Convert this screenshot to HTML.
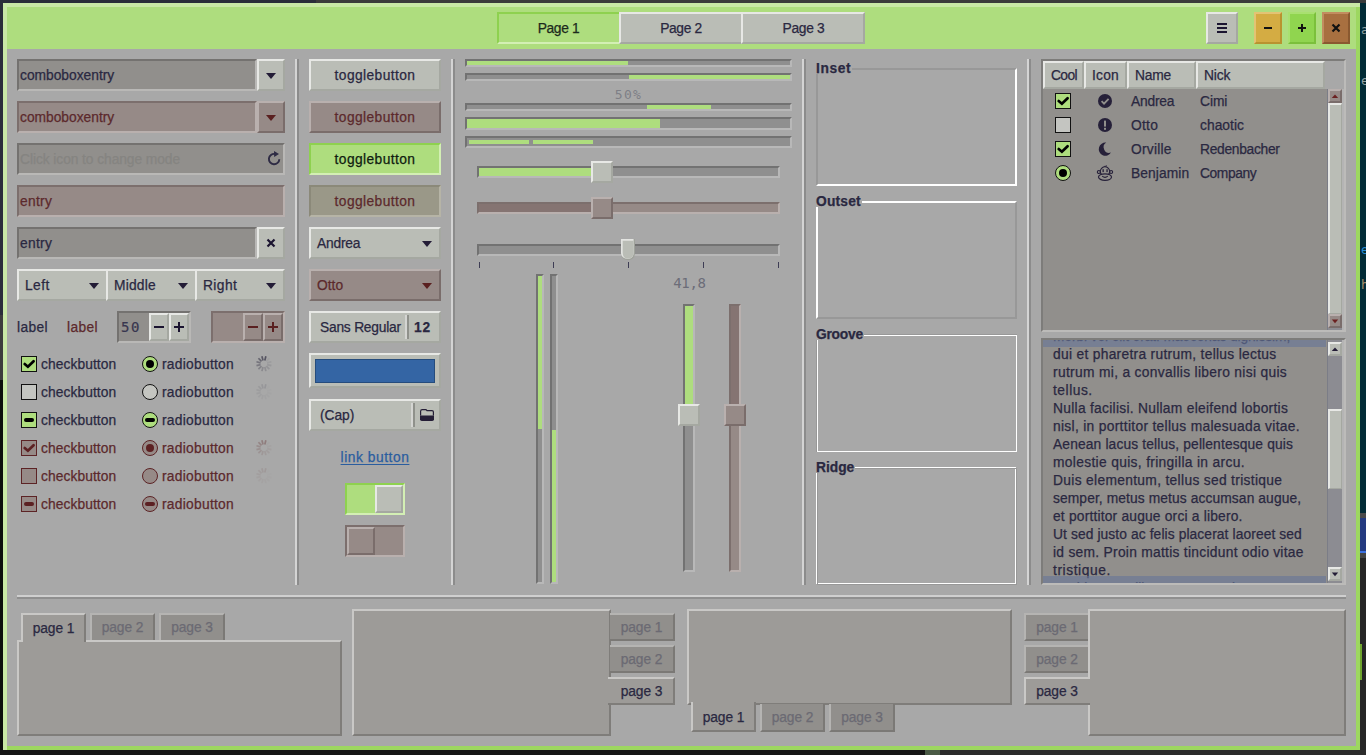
<!DOCTYPE html><html><head><meta charset='utf-8'><title>GTK3 Widget Factory</title><style>
*{box-sizing:border-box;margin:0;padding:0}
html,body{width:1366px;height:755px;overflow:hidden;background:#1b1c20}
body{position:relative;font-family:"Liberation Sans","DejaVu Sans",sans-serif;font-size:13.8px;color:#2a2841;line-height:1}
.a{position:absolute}
.t{position:absolute;white-space:nowrap;line-height:21px;height:21px;-webkit-text-stroke:0.25px currentColor}
.c{text-align:center}
.ins{color:#5c292c}
.dim{color:#6b6a73}
.entry{position:absolute;background:#918f8c;border:2px solid;border-color:#747270 #b9b8b6 #b9b8b6 #747270}
.entry.i{background:#968a87;border-color:#7c6f6d #b9b0ae #b9b0ae #7c6f6d}
.btn{position:absolute;background:#babdb6;border:2px solid;border-color:#e7e8e5 #a5a8a1 #a5a8a1 #e7e8e5}
.btn.i{background:#968a87;border-color:#b9b0ae #7a6d6b #7a6d6b #b9b0ae}
.btn.on{background:#aedd7e;border-color:#8ed14f #d3efb4 #d3efb4 #8ed14f}
.btn.oni{background:#9a9888;border-color:#8b8979 #b6b4a6 #b6b4a6 #8b8979}
.vsep{position:absolute;width:4px;border-left:2px solid #d4d4d4;border-right:2px solid #8c8c8c}
.tr{position:absolute;background:#8f8f8f;border:2px solid;border-color:#727272 #b8b8b8 #b8b8b8 #727272}
.tr.i{background:#968a87;border-color:#7c6f6d #b9b0ae #b9b0ae #7c6f6d}
.fill{position:absolute;background:#aedd7e}
.nb{position:absolute;background:#9d9b98;border:2px solid;border-color:#c9c8c6 #7f7d7a #7f7d7a #c9c8c6}
.tab{position:absolute;background:#918f8c;border:2px solid;border-color:#b5b4b2 #7b7976 #7b7976 #b5b4b2;color:#6b6a73;text-align:center}
.tab.act{background:#9d9b98;color:#2a2841;border-color:#c9c8c6 #7f7d7a #7f7d7a #c9c8c6}
.mono{font-family:"DejaVu Sans Mono","Liberation Mono",monospace;-webkit-text-stroke:0}
.b{font-weight:bold}
svg{position:absolute;overflow:visible}
</style></head><body>
<div class="a" style="left:0;top:0;width:316px;height:3px;background:#2a2d3a"></div>
<div class="a" style="left:316px;top:0;width:1050px;height:3px;background:#3b3b3b"></div>
<div class="a" style="left:0;top:3px;width:3px;height:312px;background:#2a2d3a"></div>
<div class="a" style="left:0;top:315px;width:3px;height:65px;background:#3c3c3c"></div>
<div class="a" style="left:0;top:380px;width:3px;height:375px;background:#0c0e0c"></div>
<div class="a" style="left:1360px;top:3px;width:6px;height:510px;background:#022b36"></div>
<div class="a" style="left:1360px;top:513px;width:6px;height:5px;background:#4a4a4a"></div>
<div class="a" style="left:1360px;top:518px;width:6px;height:33px;background:#233a80"></div>
<div class="a" style="left:1360px;top:551px;width:6px;height:2px;background:#3b70e0"></div>
<div class="a" style="left:1360px;top:553px;width:6px;height:5px;background:#444"></div>
<div class="a" style="left:1360px;top:558px;width:6px;height:197px;background:#262626"></div>
<div class="a" style="left:1360px;top:644px;width:2px;height:36px;background:#6fa42e"></div>
<div class="a" style="left:0;top:750px;width:1366px;height:5px;background:#151515"></div>
<div class="a" style="left:925px;top:750px;width:15px;height:5px;background:#4a5a45"></div>
<div class="a" style="left:940px;top:750px;width:426px;height:5px;background:#2b2b2b"></div>
<div class="t mono" style="left:1361px;top:19px;font-size:12.5px;color:#93a1a1">a</div>
<div class="t mono" style="left:1361px;top:70px;font-size:12.5px;color:#93a1a1">e</div>
<div class="t mono" style="left:1361px;top:239px;font-size:12.5px;color:#268bd2">e</div>
<div class="t mono" style="left:1361px;top:274px;font-size:12.5px;color:#a8916a">h</div>
<div class="a" style="left:3px;top:3px;width:1357px;height:747px;background:#a8a8a8"></div>
<div class="a" style="left:1356px;top:7px;width:4px;height:743px;background:#9dd760"></div>
<div class="a" style="left:7px;top:746px;width:1353px;height:4px;background:#9dd760"></div>
<div class="a" style="left:3px;top:3px;width:1357px;height:4px;background:#c9e8a6"></div>
<div class="a" style="left:3px;top:3px;width:4px;height:747px;background:#c9e8a6"></div>
<div class="a" style="left:7px;top:7px;width:1349px;height:42px;background:#aedd7e"></div>
<div class="btn on" style="left:497px;top:12px;width:122px;height:32px;border-right-width:0"></div>
<div class="btn" style="left:619px;top:12px;width:122px;height:32px;border-right-width:0"></div>
<div class="btn" style="left:741px;top:12px;width:124px;height:32px"></div>
<div class="t c" style="left:497px;top:18px;width:123px;letter-spacing:-0.36px;color:#1c2a1c">Page 1</div>
<div class="t c" style="left:620px;top:18px;width:122px;letter-spacing:-0.36px;">Page 2</div>
<div class="t c" style="left:742px;top:18px;width:123px;letter-spacing:-0.32px;">Page 3</div>
<div class="btn" style="left:1206px;top:12px;width:32px;height:32px"></div>
<div class="a" style="left:1217px;top:23px;width:10px;height:2px;background:#1b1430"></div>
<div class="a" style="left:1217px;top:27px;width:10px;height:2px;background:#1b1430"></div>
<div class="a" style="left:1217px;top:31px;width:10px;height:2px;background:#1b1430"></div>
<div class="btn" style="left:1254px;top:12px;width:28px;height:32px;background:#d4ac43;border-color:#e3c374 #b9932f #b9932f #e3c374"></div>
<div class="a" style="left:1264px;top:27px;width:8px;height:2px;background:#111"></div>
<div class="btn" style="left:1288px;top:12px;width:28px;height:32px;background:#90d54f;border-color:#a9e070 #7bc03b #7bc03b #a9e070"></div>
<div class="a" style="left:1298px;top:27px;width:8px;height:2px;background:#111"></div>
<div class="a" style="left:1301px;top:24px;width:2px;height:8px;background:#111"></div>
<div class="btn" style="left:1322px;top:12px;width:28px;height:32px;background:#a87040;border-color:#c28d60 #8a5930 #8a5930 #c28d60"></div>
<svg style="left:0;top:0" width="1" height="1"><path d="M1332.5 24.5 L1339.5 31.5 M1339.5 24.5 L1332.5 31.5" stroke="#111" stroke-width="2.2"/></svg>
<div class="entry" style="left:17px;top:59px;width:240px;height:32px"></div>
<div class="btn" style="left:257px;top:59px;width:28px;height:32px"></div>
<svg style="left:0;top:0" width="1" height="1"><polygon points="266.0,73.0 276.0,73.0 271,79.0" fill="#231c36"/></svg>
<div class="t " style="left:20px;top:65px;letter-spacing:-0.01px;">comboboxentry</div>
<div class="entry i" style="left:17px;top:101px;width:240px;height:32px"></div>
<div class="btn i" style="left:257px;top:101px;width:28px;height:32px"></div>
<svg style="left:0;top:0" width="1" height="1"><polygon points="266.0,115.0 276.0,115.0 271,121.0" fill="#5a2020"/></svg>
<div class="t ins" style="left:20px;top:107px;letter-spacing:-0.01px;">comboboxentry</div>
<div class="entry" style="left:17px;top:143px;width:268px;height:32px"></div>
<div class="t " style="left:20px;top:149px;letter-spacing:-0.07px;color:#858481">Click icon to change mode</div>
<svg style="left:0;top:0" width="1" height="1"><path d="M279.3 159.2 A5.2 5.2 0 1 1 274.9 153.9" fill="none" stroke="#2e2b44" stroke-width="1.9"/><polygon points="274.0,150.9 279.0,153.9 274.2,156.9" fill="#2e2b44"/></svg>
<div class="entry i" style="left:17px;top:185px;width:268px;height:32px"></div>
<div class="t ins" style="left:20px;top:191px;letter-spacing:0.30px;">entry</div>
<div class="entry" style="left:17px;top:227px;width:240px;height:32px"></div>
<div class="btn" style="left:257px;top:227px;width:28px;height:32px"></div>
<div class="t " style="left:20px;top:233px;letter-spacing:0.30px;">entry</div>
<svg style="left:0;top:0" width="1" height="1"><path d="M267.5 239.5 L274.5 246.5 M274.5 239.5 L267.5 246.5" stroke="#1b1430" stroke-width="2.2"/></svg>
<div class="btn" style="left:17px;top:269px;width:89px;height:32px;border-right-width:0"></div>
<div class="t " style="left:25px;top:275px;letter-spacing:0.42px;">Left</div>
<svg style="left:0;top:0" width="1" height="1"><polygon points="89.0,283.0 99.0,283.0 94,289.0" fill="#231c36"/></svg>
<div class="btn" style="left:106px;top:269px;width:89px;height:32px;border-right-width:0"></div>
<div class="t " style="left:114px;top:275px;letter-spacing:0.19px;">Middle</div>
<svg style="left:0;top:0" width="1" height="1"><polygon points="178.0,283.0 188.0,283.0 183,289.0" fill="#231c36"/></svg>
<div class="btn" style="left:195px;top:269px;width:90px;height:32px;"></div>
<div class="t " style="left:203px;top:275px;letter-spacing:0.40px;">Right</div>
<svg style="left:0;top:0" width="1" height="1"><polygon points="266.0,283.0 276.0,283.0 271,289.0" fill="#231c36"/></svg>
<div class="t " style="left:17px;top:317px;letter-spacing:0.33px;">label</div>
<div class="t ins" style="left:67px;top:317px;letter-spacing:0.33px;">label</div>
<div class="entry" style="left:117px;top:311px;width:74px;height:32px"></div>
<div class="btn" style="left:149px;top:313px;width:20px;height:28px"></div>
<div class="btn" style="left:169px;top:313px;width:20px;height:28px"></div>
<div class="t mono" style="left:121px;top:317px;font-size:14px;letter-spacing:1.6px;color:#38364f;-webkit-text-stroke:0.2px #38364f">50</div>
<div class="a" style="left:154px;top:326px;width:10px;height:2px;background:#1b1430"></div>
<div class="a" style="left:174px;top:326px;width:10px;height:2px;background:#1b1430"></div>
<div class="a" style="left:178px;top:322px;width:2px;height:10px;background:#1b1430"></div>
<div class="entry i" style="left:211px;top:311px;width:74px;height:32px"></div>
<div class="btn i" style="left:243px;top:313px;width:20px;height:28px"></div>
<div class="btn i" style="left:263px;top:313px;width:20px;height:28px"></div>
<div class="a" style="left:248px;top:326px;width:10px;height:2px;background:#5a2020"></div>
<div class="a" style="left:268px;top:326px;width:10px;height:2px;background:#5a2020"></div>
<div class="a" style="left:272px;top:322px;width:2px;height:10px;background:#5a2020"></div>
<div class="a" style="left:21px;top:356px;width:16px;height:16px;background:#aedd7e;border:1px solid #111"></div>
<svg style="left:21px;top:356px" width="16" height="16" viewBox="0 0 16 16"><path d="M3.7 8 L6.9 10.7 L12.6 5.2" fill="none" stroke="#000" stroke-width="2.7" stroke-linecap="round"/></svg>
<div class="t " style="left:41px;top:354px;letter-spacing:0.07px;">checkbutton</div>
<div class="a" style="left:142px;top:356px;width:16px;height:16px;border-radius:50%;background:#aedd7e;border:1.5px solid #111"></div>
<div class="a" style="left:146px;top:360px;width:8px;height:8px;border-radius:50%;background:#000"></div>
<div class="t " style="left:162px;top:354px;letter-spacing:0.27px;">radiobutton</div>
<div class="a" style="left:21px;top:384px;width:16px;height:16px;background:#c4c5c1;border:1px solid #111"></div>
<div class="t " style="left:41px;top:382px;letter-spacing:0.07px;">checkbutton</div>
<div class="a" style="left:142px;top:384px;width:16px;height:16px;border-radius:50%;background:#c4c5c1;border:1.5px solid #111"></div>
<div class="t " style="left:162px;top:382px;letter-spacing:0.27px;">radiobutton</div>
<div class="a" style="left:21px;top:412px;width:16px;height:16px;background:#aedd7e;border:1px solid #111"></div>
<div class="a" style="left:24px;top:418px;width:10px;height:4px;border-radius:2px;background:#000"></div>
<div class="t " style="left:41px;top:410px;letter-spacing:0.07px;">checkbutton</div>
<div class="a" style="left:142px;top:412px;width:16px;height:16px;border-radius:50%;background:#aedd7e;border:1.5px solid #111"></div>
<div class="a" style="left:145px;top:418px;width:10px;height:4px;border-radius:2px;background:#000"></div>
<div class="t " style="left:162px;top:410px;letter-spacing:0.27px;">radiobutton</div>
<div class="a" style="left:21px;top:440px;width:16px;height:16px;background:#968a87;border:1px solid #5c2325"></div>
<svg style="left:21px;top:440px" width="16" height="16" viewBox="0 0 16 16"><path d="M3.7 8 L6.9 10.7 L12.6 5.2" fill="none" stroke="#5c2022" stroke-width="2.7" stroke-linecap="round"/></svg>
<div class="t ins" style="left:41px;top:438px;letter-spacing:0.07px;">checkbutton</div>
<div class="a" style="left:142px;top:440px;width:16px;height:16px;border-radius:50%;background:#968a87;border:1.5px solid #5c2325"></div>
<div class="a" style="left:146px;top:444px;width:8px;height:8px;border-radius:50%;background:#5c2022"></div>
<div class="t ins" style="left:162px;top:438px;letter-spacing:0.27px;">radiobutton</div>
<div class="a" style="left:21px;top:468px;width:16px;height:16px;background:#968a87;border:1px solid #5c2325"></div>
<div class="t ins" style="left:41px;top:466px;letter-spacing:0.07px;">checkbutton</div>
<div class="a" style="left:142px;top:468px;width:16px;height:16px;border-radius:50%;background:#968a87;border:1.5px solid #5c2325"></div>
<div class="t ins" style="left:162px;top:466px;letter-spacing:0.27px;">radiobutton</div>
<div class="a" style="left:21px;top:496px;width:16px;height:16px;background:#968a87;border:1px solid #5c2325"></div>
<div class="a" style="left:24px;top:502px;width:10px;height:4px;border-radius:2px;background:#5c2022"></div>
<div class="t ins" style="left:41px;top:494px;letter-spacing:0.07px;">checkbutton</div>
<div class="a" style="left:142px;top:496px;width:16px;height:16px;border-radius:50%;background:#968a87;border:1.5px solid #5c2325"></div>
<div class="a" style="left:145px;top:502px;width:10px;height:4px;border-radius:2px;background:#5c2022"></div>
<div class="t ins" style="left:162px;top:494px;letter-spacing:0.27px;">radiobutton</div>
<svg style="left:0;top:0;opacity:0.78" width="1" height="1"><line x1="264.78" y1="360.42" x2="265.89" y2="356.26" stroke="#3f3d4e" stroke-width="1.7" stroke-opacity="1.00"/><line x1="263.02" y1="360.42" x2="261.91" y2="356.26" stroke="#3f3d4e" stroke-width="1.7" stroke-opacity="0.95"/><line x1="261.50" y1="361.30" x2="258.46" y2="358.26" stroke="#3f3d4e" stroke-width="1.7" stroke-opacity="0.80"/><line x1="260.62" y1="362.82" x2="256.46" y2="361.71" stroke="#3f3d4e" stroke-width="1.7" stroke-opacity="0.62"/><line x1="260.62" y1="364.58" x2="256.46" y2="365.69" stroke="#3f3d4e" stroke-width="1.7" stroke-opacity="0.55"/><line x1="261.50" y1="366.10" x2="258.46" y2="369.14" stroke="#3f3d4e" stroke-width="1.7" stroke-opacity="0.45"/><line x1="263.02" y1="366.98" x2="261.91" y2="371.14" stroke="#3f3d4e" stroke-width="1.7" stroke-opacity="0.36"/><line x1="264.78" y1="366.98" x2="265.89" y2="371.14" stroke="#3f3d4e" stroke-width="1.7" stroke-opacity="0.30"/><line x1="266.30" y1="366.10" x2="269.34" y2="369.14" stroke="#3f3d4e" stroke-width="1.7" stroke-opacity="0.24"/><line x1="267.18" y1="364.58" x2="271.34" y2="365.69" stroke="#3f3d4e" stroke-width="1.7" stroke-opacity="0.18"/><line x1="267.18" y1="362.82" x2="271.34" y2="361.71" stroke="#3f3d4e" stroke-width="1.7" stroke-opacity="0.13"/><line x1="266.30" y1="361.30" x2="269.34" y2="358.26" stroke="#3f3d4e" stroke-width="1.7" stroke-opacity="0.08"/></svg>
<svg style="left:0;top:0;opacity:0.16" width="1" height="1"><line x1="264.78" y1="388.42" x2="265.89" y2="384.26" stroke="#3f3d4e" stroke-width="1.7" stroke-opacity="1.00"/><line x1="263.02" y1="388.42" x2="261.91" y2="384.26" stroke="#3f3d4e" stroke-width="1.7" stroke-opacity="0.95"/><line x1="261.50" y1="389.30" x2="258.46" y2="386.26" stroke="#3f3d4e" stroke-width="1.7" stroke-opacity="0.80"/><line x1="260.62" y1="390.82" x2="256.46" y2="389.71" stroke="#3f3d4e" stroke-width="1.7" stroke-opacity="0.62"/><line x1="260.62" y1="392.58" x2="256.46" y2="393.69" stroke="#3f3d4e" stroke-width="1.7" stroke-opacity="0.55"/><line x1="261.50" y1="394.10" x2="258.46" y2="397.14" stroke="#3f3d4e" stroke-width="1.7" stroke-opacity="0.45"/><line x1="263.02" y1="394.98" x2="261.91" y2="399.14" stroke="#3f3d4e" stroke-width="1.7" stroke-opacity="0.36"/><line x1="264.78" y1="394.98" x2="265.89" y2="399.14" stroke="#3f3d4e" stroke-width="1.7" stroke-opacity="0.30"/><line x1="266.30" y1="394.10" x2="269.34" y2="397.14" stroke="#3f3d4e" stroke-width="1.7" stroke-opacity="0.24"/><line x1="267.18" y1="392.58" x2="271.34" y2="393.69" stroke="#3f3d4e" stroke-width="1.7" stroke-opacity="0.18"/><line x1="267.18" y1="390.82" x2="271.34" y2="389.71" stroke="#3f3d4e" stroke-width="1.7" stroke-opacity="0.13"/><line x1="266.30" y1="389.30" x2="269.34" y2="386.26" stroke="#3f3d4e" stroke-width="1.7" stroke-opacity="0.08"/></svg>
<svg style="left:0;top:0;opacity:0.4" width="1" height="1"><line x1="264.78" y1="444.42" x2="265.89" y2="440.26" stroke="#6a3a3a" stroke-width="1.7" stroke-opacity="1.00"/><line x1="263.02" y1="444.42" x2="261.91" y2="440.26" stroke="#6a3a3a" stroke-width="1.7" stroke-opacity="0.95"/><line x1="261.50" y1="445.30" x2="258.46" y2="442.26" stroke="#6a3a3a" stroke-width="1.7" stroke-opacity="0.80"/><line x1="260.62" y1="446.82" x2="256.46" y2="445.71" stroke="#6a3a3a" stroke-width="1.7" stroke-opacity="0.62"/><line x1="260.62" y1="448.58" x2="256.46" y2="449.69" stroke="#6a3a3a" stroke-width="1.7" stroke-opacity="0.55"/><line x1="261.50" y1="450.10" x2="258.46" y2="453.14" stroke="#6a3a3a" stroke-width="1.7" stroke-opacity="0.45"/><line x1="263.02" y1="450.98" x2="261.91" y2="455.14" stroke="#6a3a3a" stroke-width="1.7" stroke-opacity="0.36"/><line x1="264.78" y1="450.98" x2="265.89" y2="455.14" stroke="#6a3a3a" stroke-width="1.7" stroke-opacity="0.30"/><line x1="266.30" y1="450.10" x2="269.34" y2="453.14" stroke="#6a3a3a" stroke-width="1.7" stroke-opacity="0.24"/><line x1="267.18" y1="448.58" x2="271.34" y2="449.69" stroke="#6a3a3a" stroke-width="1.7" stroke-opacity="0.18"/><line x1="267.18" y1="446.82" x2="271.34" y2="445.71" stroke="#6a3a3a" stroke-width="1.7" stroke-opacity="0.13"/><line x1="266.30" y1="445.30" x2="269.34" y2="442.26" stroke="#6a3a3a" stroke-width="1.7" stroke-opacity="0.08"/></svg>
<svg style="left:0;top:0;opacity:0.13" width="1" height="1"><line x1="264.78" y1="472.42" x2="265.89" y2="468.26" stroke="#6a3a3a" stroke-width="1.7" stroke-opacity="1.00"/><line x1="263.02" y1="472.42" x2="261.91" y2="468.26" stroke="#6a3a3a" stroke-width="1.7" stroke-opacity="0.95"/><line x1="261.50" y1="473.30" x2="258.46" y2="470.26" stroke="#6a3a3a" stroke-width="1.7" stroke-opacity="0.80"/><line x1="260.62" y1="474.82" x2="256.46" y2="473.71" stroke="#6a3a3a" stroke-width="1.7" stroke-opacity="0.62"/><line x1="260.62" y1="476.58" x2="256.46" y2="477.69" stroke="#6a3a3a" stroke-width="1.7" stroke-opacity="0.55"/><line x1="261.50" y1="478.10" x2="258.46" y2="481.14" stroke="#6a3a3a" stroke-width="1.7" stroke-opacity="0.45"/><line x1="263.02" y1="478.98" x2="261.91" y2="483.14" stroke="#6a3a3a" stroke-width="1.7" stroke-opacity="0.36"/><line x1="264.78" y1="478.98" x2="265.89" y2="483.14" stroke="#6a3a3a" stroke-width="1.7" stroke-opacity="0.30"/><line x1="266.30" y1="478.10" x2="269.34" y2="481.14" stroke="#6a3a3a" stroke-width="1.7" stroke-opacity="0.24"/><line x1="267.18" y1="476.58" x2="271.34" y2="477.69" stroke="#6a3a3a" stroke-width="1.7" stroke-opacity="0.18"/><line x1="267.18" y1="474.82" x2="271.34" y2="473.71" stroke="#6a3a3a" stroke-width="1.7" stroke-opacity="0.13"/><line x1="266.30" y1="473.30" x2="269.34" y2="470.26" stroke="#6a3a3a" stroke-width="1.7" stroke-opacity="0.08"/></svg>
<div class="vsep" style="left:295px;top:59px;height:526px"></div>
<div class="vsep" style="left:451px;top:59px;height:526px"></div>
<div class="vsep" style="left:802px;top:59px;height:526px"></div>
<div class="vsep" style="left:1027px;top:59px;height:526px"></div>
<div class="a" style="left:17px;top:595px;width:1329px;height:4px;border-top:2px solid #cfcfcf;border-bottom:2px solid #8f8f8f"></div>
<div class="btn" style="left:309px;top:59px;width:132px;height:32px"></div>
<div class="t c" style="left:309px;top:65px;width:132px;letter-spacing:0.40px;">togglebutton</div>
<div class="btn i" style="left:309px;top:101px;width:132px;height:32px"></div>
<div class="t c ins" style="left:309px;top:107px;width:132px;letter-spacing:0.40px;">togglebutton</div>
<div class="btn on" style="left:309px;top:143px;width:132px;height:32px"></div>
<div class="t c" style="left:309px;top:149px;width:132px;letter-spacing:0.40px;color:#101c10">togglebutton</div>
<div class="btn oni" style="left:309px;top:185px;width:132px;height:32px"></div>
<div class="t c ins" style="left:309px;top:191px;width:132px;letter-spacing:0.40px;">togglebutton</div>
<div class="btn" style="left:309px;top:227px;width:132px;height:32px"></div>
<div class="t " style="left:317px;top:233px;letter-spacing:-0.22px;">Andrea</div>
<svg style="left:0;top:0" width="1" height="1"><polygon points="422.0,241.0 432.0,241.0 427,247.0" fill="#231c36"/></svg>
<div class="btn i" style="left:309px;top:269px;width:132px;height:32px"></div>
<div class="t ins" style="left:317px;top:275px;letter-spacing:0.03px;">Otto</div>
<svg style="left:0;top:0" width="1" height="1"><polygon points="422.0,283.0 432.0,283.0 427,289.0" fill="#5a2020"/></svg>
<div class="btn" style="left:309px;top:311px;width:132px;height:32px"></div>
<div class="t " style="left:320px;top:317px;letter-spacing:-0.23px;">Sans Regular</div>
<div class="a" style="left:405px;top:315px;width:4px;height:24px;border-left:2px solid #d4d5d2;border-right:2px solid #8f918b"></div>
<div class="t b" style="left:414px;top:317px;letter-spacing:0.77px;">12</div>
<div class="btn" style="left:309px;top:353px;width:132px;height:35px"></div>
<div class="a" style="left:315px;top:359px;width:120px;height:24px;background:#3465a4;border:1px solid #264c7c"></div>
<div class="btn" style="left:309px;top:399px;width:132px;height:32px"></div>
<div class="t " style="left:320px;top:405px;letter-spacing:-0.06px;">(Cap)</div>
<div class="a" style="left:411px;top:403px;width:4px;height:24px;border-left:2px solid #d4d5d2;border-right:2px solid #8f918b"></div>
<svg style="left:420px;top:409px" width="14" height="12" viewBox="0 0 14 12"><path d="M0.6 6.4 L0.6 2.2 Q0.6 0.6 2.2 0.6 L5.6 0.6 Q6.4 0.6 7 1.6 L12 1.6 Q13.4 1.6 13.4 3 L13.4 6.4" fill="none" stroke="#241e36" stroke-width="1.2"/><path d="M0 6.4 H14 V10.2 Q14 12 12.2 12 H1.8 Q0 12 0 10.2 Z" fill="#241e36"/></svg>
<div class="t c" style="left:309px;top:447px;width:132px;letter-spacing:0.54px;color:#2a5d9f;text-decoration:underline;text-underline-offset:2px">link button</div>
<div class="btn on" style="left:345px;top:483px;width:60px;height:32px"></div>
<div class="btn" style="left:375px;top:485px;width:28px;height:28px"></div>
<div class="entry i" style="left:345px;top:525px;width:60px;height:32px"></div>
<div class="btn i" style="left:347px;top:527px;width:28px;height:28px"></div>
<div class="tr" style="left:465px;top:59px;width:327px;height:8px"></div>
<div class="fill" style="left:467px;top:61px;width:161px;height:4px"></div>
<div class="tr" style="left:465px;top:73px;width:327px;height:8px"></div>
<div class="fill" style="left:629px;top:75px;width:161px;height:4px"></div>
<div class="t mono c" style="left:465px;top:84px;width:327px;font-size:13px;letter-spacing:1.3px;color:#7e7f86">50%</div>
<div class="tr" style="left:465px;top:103px;width:327px;height:8px"></div>
<div class="fill" style="left:647px;top:105px;width:64px;height:4px"></div>
<div class="tr" style="left:465px;top:117px;width:327px;height:13px"></div>
<div class="fill" style="left:467px;top:119px;width:193px;height:9px"></div>
<div class="tr" style="left:465px;top:136px;width:327px;height:12px"></div>
<div class="fill" style="left:469px;top:140px;width:60px;height:4px"></div>
<div class="fill" style="left:533px;top:140px;width:60px;height:4px"></div>
<div class="tr" style="left:477px;top:166px;width:303px;height:12px"></div>
<div class="fill" style="left:479px;top:168px;width:115px;height:8px"></div>
<div class="btn" style="left:591px;top:161px;width:22px;height:22px"></div>
<div class="tr i" style="left:477px;top:202px;width:303px;height:12px"></div>
<div class="a" style="left:479px;top:204px;width:115px;height:8px;background:#857472"></div>
<div class="btn i" style="left:591px;top:197px;width:22px;height:22px"></div>
<div class="tr" style="left:477px;top:244px;width:303px;height:12px"></div>
<svg style="left:621px;top:239px" width="14" height="21" viewBox="0 0 14 21"><path d="M0 0 H14 V13.5 Q14 21 7 21 Q0 21 0 13.5 Z" fill="#9fa29b"/><path d="M0 0 H12.6 V13.5 Q12.6 19.8 7 19.8 Q0 19.8 0 13.5 Z" fill="#e3e4e1"/><path d="M1.7 1.7 H12.5 V13.5 Q12.5 19.6 7 19.6 Q1.7 19.6 1.7 13.5 Z" fill="#babdb6"/></svg>
<div class="a" style="left:479px;top:262px;width:1px;height:6px;background:#3e3d55"></div>
<div class="a" style="left:553px;top:262px;width:1px;height:6px;background:#3e3d55"></div>
<div class="a" style="left:628px;top:262px;width:1px;height:6px;background:#3e3d55"></div>
<div class="a" style="left:703px;top:262px;width:1px;height:6px;background:#3e3d55"></div>
<div class="a" style="left:778px;top:262px;width:1px;height:6px;background:#3e3d55"></div>
<div class="tr" style="left:536px;top:274px;width:8px;height:310px"></div>
<div class="fill" style="left:538px;top:276px;width:4px;height:153px"></div>
<div class="tr" style="left:550px;top:274px;width:8px;height:310px"></div>
<div class="fill" style="left:552px;top:430px;width:4px;height:152px"></div>
<div class="t mono c" style="left:669px;top:273px;width:41px;font-size:14px;letter-spacing:-0.3px;color:#6c6d78">41,8</div>
<div class="tr" style="left:683px;top:304px;width:12px;height:268px"></div>
<div class="fill" style="left:685px;top:306px;width:8px;height:100px"></div>
<div class="btn" style="left:678px;top:404px;width:22px;height:22px"></div>
<div class="tr i" style="left:729px;top:304px;width:12px;height:268px"></div>
<div class="a" style="left:731px;top:306px;width:8px;height:100px;background:#857472"></div>
<div class="btn i" style="left:724px;top:404px;width:22px;height:22px"></div>
<div class="a" style="left:816px;top:68px;width:201px;height:118px;border:2px solid;border-color:#989898 #ffffff #ffffff #989898"></div>
<div class="a" style="left:816px;top:68px;width:36px;height:6px;background:#a8a8a8"></div>
<div class="t b" style="left:816px;top:58px;letter-spacing:0.60px;">Inset</div>
<div class="a" style="left:816px;top:201px;width:201px;height:118px;border:2px solid;border-color:#ffffff #989898 #989898 #ffffff"></div>
<div class="a" style="left:816px;top:201px;width:45.6px;height:6px;background:#a8a8a8"></div>
<div class="t b" style="left:816px;top:191px;letter-spacing:0.18px;">Outset</div>
<div class="a" style="left:816px;top:334px;width:201px;height:118px;border:1px solid #989898"></div>
<div class="a" style="left:817px;top:335px;width:200px;height:117px;border:1px solid #ffffff"></div>
<div class="a" style="left:816px;top:334px;width:47.6px;height:6px;background:#a8a8a8"></div>
<div class="t b" style="left:816px;top:324px;letter-spacing:-0.25px;">Groove</div>
<div class="a" style="left:816px;top:467px;width:200px;height:117px;border:1px solid #ffffff"></div>
<div class="a" style="left:817px;top:468px;width:200px;height:117px;border:1px solid #989898"></div>
<div class="a" style="left:816px;top:467px;width:39px;height:6px;background:#a8a8a8"></div>
<div class="t b" style="left:816px;top:457px;letter-spacing:-0.03px;">Ridge</div>
<div class="a" style="left:1041px;top:59px;width:305px;height:273px;background:#918f8c;border:2px solid;border-color:#7d7c7a #bcbbb9 #bcbbb9 #7d7c7a"></div>
<div class="a" style="left:1325px;top:61px;width:19px;height:28px;background:#a8a8a8"></div>
<div class="btn" style="left:1043px;top:61px;width:41px;height:28px"></div>
<div class="t " style="left:1051px;top:65px;letter-spacing:-0.60px;">Cool</div>
<div class="btn" style="left:1084px;top:61px;width:43px;height:28px"></div>
<div class="t " style="left:1092px;top:65px;letter-spacing:0.23px;">Icon</div>
<div class="btn" style="left:1127px;top:61px;width:69px;height:28px"></div>
<div class="t " style="left:1135px;top:65px;letter-spacing:-0.23px;">Name</div>
<div class="btn" style="left:1196px;top:61px;width:129px;height:28px"></div>
<div class="t " style="left:1204px;top:65px;letter-spacing:-0.11px;">Nick</div>
<div class="a" style="left:1055px;top:93px;width:16px;height:16px;background:#aedd7e;border:1px solid #111"></div>
<svg style="left:1055px;top:93px" width="16" height="16" viewBox="0 0 16 16"><path d="M3.7 8 L6.9 10.7 L12.6 5.2" fill="none" stroke="#000" stroke-width="2.7" stroke-linecap="round"/></svg>
<div class="t " style="left:1131px;top:91px;letter-spacing:-0.22px;">Andrea</div>
<div class="t " style="left:1200px;top:91px;letter-spacing:-0.05px;">Cimi</div>
<div class="a" style="left:1055px;top:117px;width:16px;height:16px;background:#c4c5c1;border:1px solid #111"></div>
<div class="t " style="left:1131px;top:115px;letter-spacing:0.28px;">Otto</div>
<div class="t " style="left:1200px;top:115px;letter-spacing:0.03px;">chaotic</div>
<div class="a" style="left:1055px;top:141px;width:16px;height:16px;background:#aedd7e;border:1px solid #111"></div>
<svg style="left:1055px;top:141px" width="16" height="16" viewBox="0 0 16 16"><path d="M3.7 8 L6.9 10.7 L12.6 5.2" fill="none" stroke="#000" stroke-width="2.7" stroke-linecap="round"/></svg>
<div class="t " style="left:1131px;top:139px;letter-spacing:0.22px;">Orville</div>
<div class="t " style="left:1200px;top:139px;letter-spacing:-0.29px;">Redenbacher</div>
<div class="a" style="left:1055px;top:165px;width:16px;height:16px;border-radius:50%;background:#aedd7e;border:1.5px solid #111"></div>
<div class="a" style="left:1059px;top:169px;width:8px;height:8px;border-radius:50%;background:#000"></div>
<div class="t " style="left:1131px;top:163px;letter-spacing:0.08px;">Benjamin</div>
<div class="t " style="left:1200px;top:163px;letter-spacing:-0.41px;">Company</div>
<svg style="left:1098px;top:94px" width="14" height="14" viewBox="0 0 14 14"><circle cx="7" cy="7" r="7" fill="#262039"/><path d="M3.6 7.2 L6 9.6 L10.6 4.8" fill="none" stroke="#918f8c" stroke-width="1.8"/></svg>
<svg style="left:1098px;top:118px" width="14" height="14" viewBox="0 0 14 14"><circle cx="7" cy="7" r="7" fill="#262039"/><rect x="6" y="2.6" width="2" height="6" fill="#918f8c"/><rect x="6" y="9.8" width="2" height="2" fill="#918f8c"/></svg>
<svg style="left:1098px;top:142px" width="14" height="14" viewBox="0 0 14 14"><path d="M8.2 0.6 A6.6 6.6 0 1 0 13 10.6 A5.6 5.6 0 0 1 8.2 0.6 Z" fill="#262039"/></svg>
<svg style="left:1097px;top:165px" width="16" height="16" viewBox="0 0 16 16" fill="none" stroke="#262039" stroke-width="1.2"><path d="M4.43 9.4 A4.6 4.6 0 1 1 11.57 9.4"/><circle cx="1.9" cy="7" r="1.5"/><circle cx="14.1" cy="7" r="1.5"/><ellipse cx="8" cy="12.1" rx="6.5" ry="3.2"/><path d="M5.2 11.2 Q8 13.6 10.8 11.2" stroke-width="1.1"/><rect x="5.5" y="4.2" width="1.3" height="2.9" fill="#262039" stroke="none"/><rect x="9.4" y="4.2" width="1.3" height="2.9" fill="#262039" stroke="none"/><path d="M7.4 1.9 L8.2 0.6 M8.2 1.8 L10 0.5" stroke-width="0.8"/></svg>
<div class="a" style="left:1327px;top:89px;width:17px;height:241px;background:#8c8c92;border-left:1px solid #7b7d87;border-right:2px solid #b4b4b4"></div>
<div class="btn i" style="left:1328px;top:89px;width:14px;height:14px"></div>
<svg style="left:0;top:0" width="1" height="1"><polygon points="1331.8,98.0 1338.2,98.0 1335,94.4" fill="#6b2020"/></svg>
<div class="btn" style="left:1328px;top:103px;width:14px;height:211px;border-width:2px 1px 1px 2px"></div>
<div class="btn i" style="left:1328px;top:314px;width:14px;height:14px"></div>
<svg style="left:0;top:0" width="1" height="1"><polygon points="1331.8,319.59999999999997 1338.2,319.59999999999997 1335,323.2" fill="#6b2020"/></svg>
<div class="a" style="left:1041px;top:338px;width:305px;height:247px;background:#918f8c;border:2px solid;border-color:#7d7c7a #bcbbb9 #bcbbb9 #7d7c7a;overflow:hidden"></div>
<div class="a" style="left:1043px;top:340px;width:283px;height:243px;overflow:hidden">
<div class="t " style="left:10px;top:-14px;letter-spacing:-0.11px;">Morbi vel elit erat. Maecenas dignissim,</div>
<div class="t " style="left:10px;top:4px;letter-spacing:0.30px;">dui et pharetra rutrum, tellus lectus</div>
<div class="t " style="left:10px;top:22px;letter-spacing:0.32px;">rutrum mi, a convallis libero nisi quis</div>
<div class="t " style="left:10px;top:40px;letter-spacing:0.52px;">tellus.</div>
<div class="t " style="left:10px;top:58px;letter-spacing:0.28px;">Nulla facilisi. Nullam eleifend lobortis</div>
<div class="t " style="left:10px;top:76px;letter-spacing:0.31px;">nisl, in porttitor tellus malesuada vitae.</div>
<div class="t " style="left:10px;top:94px;letter-spacing:0.14px;">Aenean lacus tellus, pellentesque quis</div>
<div class="t " style="left:10px;top:112px;letter-spacing:0.33px;">molestie quis, fringilla in arcu.</div>
<div class="t " style="left:10px;top:130px;letter-spacing:0.32px;">Duis elementum, tellus sed tristique</div>
<div class="t " style="left:10px;top:148px;letter-spacing:0.10px;">semper, metus metus accumsan augue,</div>
<div class="t " style="left:10px;top:166px;letter-spacing:0.19px;">et porttitor augue orci a libero.</div>
<div class="t " style="left:10px;top:184px;letter-spacing:0.10px;">Ut sed justo ac felis placerat laoreet sed</div>
<div class="t " style="left:10px;top:202px;letter-spacing:0.28px;">id sem. Proin mattis tincidunt odio vitae</div>
<div class="t " style="left:10px;top:220px;letter-spacing:0.58px;">tristique.</div>
<div class="t " style="left:10px;top:238px;letter-spacing:-0.04px;">Morbi massa libero, congue vitae</div>
<div class="a" style="left:0;top:0;width:284px;height:7px;background:rgba(104,118,152,0.62)"></div>
<div class="a" style="left:0;top:236px;width:284px;height:7px;background:rgba(104,118,152,0.62)"></div>
</div>
<div class="a" style="left:1327px;top:340px;width:17px;height:243px;background:#8c8c92;border-left:1px solid #7b7d87;border-right:2px solid #b4b4b4"></div>
<div class="btn" style="left:1328px;top:342px;width:14px;height:14px"></div>
<svg style="left:0;top:0" width="1" height="1"><polygon points="1331.8,351.0 1338.2,351.0 1335,347.4" fill="#231c36"/></svg>
<div class="btn" style="left:1328px;top:409px;width:14px;height:80px;border-width:2px 1px 1px 2px"></div>
<div class="btn" style="left:1328px;top:567px;width:14px;height:14px"></div>
<svg style="left:0;top:0" width="1" height="1"><polygon points="1331.8,572.6 1338.2,572.6 1335,576.2" fill="#231c36"/></svg>
<div class="nb" style="left:17px;top:640px;width:325px;height:96px"></div>
<div class="tab act" style="left:21px;top:613px;width:65px;height:29px;border-bottom:none"></div>
<div class="tab" style="left:90px;top:613px;width:65px;height:27px;border-bottom:none"></div>
<div class="tab" style="left:159px;top:613px;width:66px;height:27px;border-bottom:none"></div>
<div class="t c" style="left:21px;top:618px;width:65px;letter-spacing:-0.12px;">page 1</div>
<div class="t c dim" style="left:90px;top:617px;width:65px;letter-spacing:-0.12px;">page 2</div>
<div class="t c dim" style="left:159px;top:617px;width:66px;letter-spacing:-0.12px;">page 3</div>
<div class="nb" style="left:352px;top:609px;width:259px;height:127px"></div>
<div class="tab" style="left:610px;top:613px;width:65px;height:28px;border-left:none"></div>
<div class="tab" style="left:610px;top:645px;width:65px;height:28px;border-left:none"></div>
<div class="tab act" style="left:608px;top:677px;width:67px;height:28px;border-left:none"></div>
<div class="t c dim" style="left:610px;top:617px;width:63px;letter-spacing:-0.12px;">page 1</div>
<div class="t c dim" style="left:610px;top:649px;width:63px;letter-spacing:-0.12px;">page 2</div>
<div class="t c" style="left:610px;top:681px;width:63px;letter-spacing:-0.12px;">page 3</div>
<div class="nb" style="left:687px;top:609px;width:325px;height:96px"></div>
<div class="tab act" style="left:691px;top:702px;width:65px;height:30px;border-top:none"></div>
<div class="tab" style="left:760px;top:704px;width:65px;height:28px;border-top:none"></div>
<div class="tab" style="left:829px;top:704px;width:66px;height:28px;border-top:none"></div>
<div class="t c" style="left:691px;top:707px;width:65px;letter-spacing:-0.12px;">page 1</div>
<div class="t c dim" style="left:760px;top:707px;width:65px;letter-spacing:-0.12px;">page 2</div>
<div class="t c dim" style="left:829px;top:707px;width:66px;letter-spacing:-0.12px;">page 3</div>
<div class="nb" style="left:1088px;top:609px;width:258px;height:127px"></div>
<div class="tab" style="left:1024px;top:613px;width:64px;height:28px;border-right:none"></div>
<div class="tab" style="left:1024px;top:645px;width:64px;height:28px;border-right:none"></div>
<div class="tab act" style="left:1024px;top:677px;width:66px;height:28px;border-right:none"></div>
<div class="t c dim" style="left:1026px;top:617px;width:62px;letter-spacing:-0.12px;">page 1</div>
<div class="t c dim" style="left:1026px;top:649px;width:62px;letter-spacing:-0.12px;">page 2</div>
<div class="t c" style="left:1026px;top:681px;width:62px;letter-spacing:-0.12px;">page 3</div>
</body></html>
